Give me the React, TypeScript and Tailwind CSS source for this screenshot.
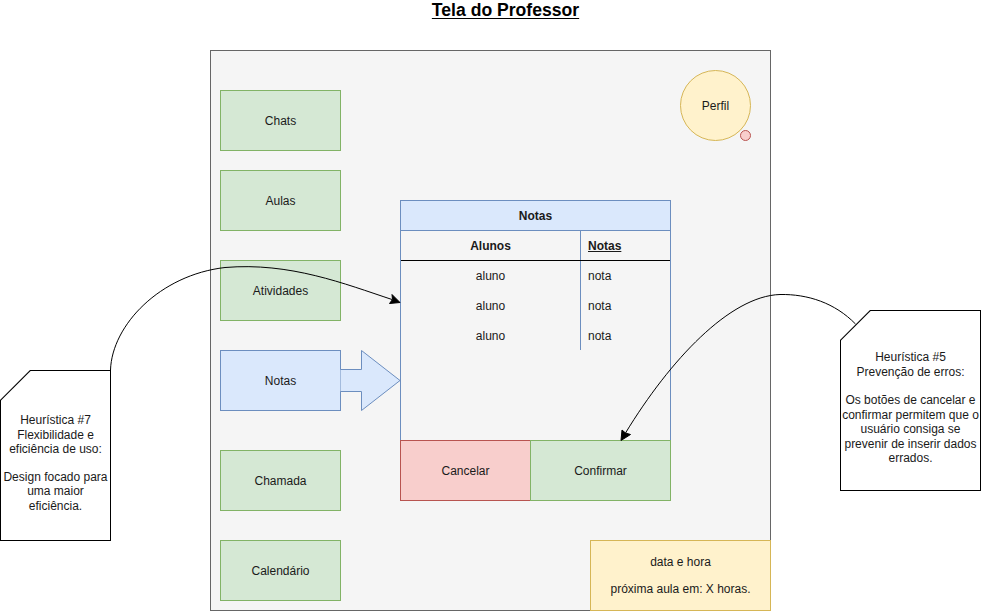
import React from "react";

const Node = ({
  x, y, w, h, cls, children,
}: { x: number; y: number; w: number; h: number; cls: string; children?: React.ReactNode }) => (
  <div
    className={`absolute flex items-center justify-center text-center border ${cls}`}
    style={{ left: x, top: y, width: w + 1, height: h + 1 }}
  >
    {children}
  </div>
);

const green = "bg-[#d5e8d4] border-[#82b366]";
const blue = "bg-[#dae8fc] border-[#6c8ebf]";

export default function App() {
  return (
    <div className="relative w-[981px] h-[611px] bg-white overflow-hidden font-['Liberation_Sans',Arial,sans-serif] text-[12px] text-[#1a1a1a]">
      <div className="absolute left-0 right-0 top-0 flex justify-center">
        <span className="text-[17.6px] leading-[20px] font-bold underline underline-offset-[2px] ml-[30px] text-black">Tela do Professor</span>
      </div>

      {/* main frame */}
      <div className="absolute left-[210px] top-[50px] w-[561px] h-[561px] bg-[#f5f5f5] border border-[#666666]" />

      <Node x={220} y={90} w={120} h={60} cls={green}>Chats</Node>
      <Node x={220} y={170} w={120} h={60} cls={green}>Aulas</Node>
      <Node x={220} y={260} w={120} h={60} cls={green}>Atividades</Node>
      <Node x={220} y={350} w={120} h={60} cls={blue}>Notas</Node>
      <Node x={220} y={450} w={120} h={60} cls={green}>Chamada</Node>
      <Node x={220} y={540} w={120} h={60} cls={green}>Calendário</Node>

      {/* Perfil */}
      <div className="absolute left-[680px] top-[70px] w-[71px] h-[71px] rounded-full bg-[#fff2cc] border border-[#d6b656] flex items-center justify-center">
        Perfil
      </div>
      <div className="absolute left-[740px] top-[130px] w-[11px] h-[11px] rounded-full bg-[#f8cecc] border border-[#b85450]" />

      {/* Table */}
      <div className="absolute left-[400px] top-[200px] w-[271px] h-[241px] border border-[#6c8ebf] flex flex-col">
        <div className="h-[30px] bg-[#dae8fc] border-b border-[#6c8ebf] flex items-center justify-center font-bold">Notas</div>
        <div className="h-[30px] flex border-b border-black">
          <div className="w-[180px] border-r border-[#6c8ebf] flex items-center justify-center font-bold">Alunos</div>
          <div className="flex-1 flex items-center pl-[7px] font-bold underline">Notas</div>
        </div>
        {[0, 1, 2].map((i) => (
          <div key={i} className="h-[30px] flex">
            <div className={`w-[180px] border-r border-[#6c8ebf] flex items-center justify-center ${i === 2 ? "h-[29px]" : ""}`}>aluno</div>
            <div className="flex-1 flex items-center pl-[7px]">nota</div>
          </div>
        ))}
      </div>
      <Node x={400} y={440} w={130} h={60} cls="bg-[#f8cecc] border-[#b85450]">Cancelar</Node>
      <Node x={530} y={440} w={140} h={60} cls={green}>Confirmar</Node>

      {/* Date box */}
      <div className="absolute left-[590px] top-[540px] w-[181px] h-[71px] bg-[#fff2cc] border border-[#d6b656] flex flex-col items-center justify-center gap-[12px] leading-[15px]">
        <div>data e hora</div>
        <div>próxima aula em: X horas.</div>
      </div>

      {/* Notes */}
      <div
        className="absolute left-0 top-[370px] w-[111px] h-[171px] bg-black"
        style={{ clipPath: "polygon(30px 0, 100% 0, 100% 100%, 0 100%, 0 30px)" }}
      >
        <div
          className="absolute inset-[1px] bg-white flex flex-col items-center justify-center text-center leading-[14.5px] pt-[15px]"
          style={{ clipPath: "polygon(29.6px 0, 100% 0, 100% 100%, 0 100%, 0 29.6px)" }}
        >
          <div>Heurística #7</div>
          <div>Flexibilidade e</div>
          <div>eficiência de uso:</div>
          <div className="h-[13px]" />
          <div>Design focado para</div>
          <div>uma maior</div>
          <div>eficiência.</div>
        </div>
      </div>
      <div
        className="absolute left-[840px] top-[310px] w-[141px] h-[181px] bg-black"
        style={{ clipPath: "polygon(30px 0, 100% 0, 100% 100%, 0 100%, 0 30px)" }}
      >
        <div
          className="absolute left-[1px] top-[1px] bottom-[1px] right-[1px] bg-white flex flex-col items-center justify-center text-center leading-[14.5px] pt-[15px]"
          style={{ clipPath: "polygon(29.6px 0, 100% 0, 100% 100%, 0 100%, 0 29.6px)" }}
        >
          <div>Heurística #5</div>
          <div>Prevenção de erros:</div>
          <div className="h-[14px]" />
          <div>Os botões de cancelar e</div>
          <div>confirmar permitem que o</div>
          <div>usuário consiga se</div>
          <div>prevenir de inserir dados</div>
          <div>errados.</div>
        </div>
      </div>

      {/* Drawings */}
      <svg className="absolute inset-0 pointer-events-none" width={981} height={611}>
        {/* block arrow */}
        <path
          d="M340.5 369.5 H361.5 V350.5 L400 380.5 L361.5 410.5 V391.5 H340.5"
          fill="#dae8fc"
          stroke="#6c8ebf"
          strokeWidth={1}
        />
        {/* left connector */}
        <path
          d="M110.5 370 C112 325, 160 275, 225 267.5 C 290 262, 345 284, 392 299.5"
          fill="none"
          stroke="#000"
          strokeWidth={1}
        />
        <path d="M400 302.5 L389.5 303.5 L392.5 299.5 L392 294.5 Z" fill="#000" stroke="#000" strokeWidth={1} />
        {/* right connector */}
        <path
          d="M855.5 324 C 835 303, 808 294, 780 294.5 C 730 296, 670 360, 625.5 433"
          fill="none"
          stroke="#000"
          strokeWidth={1}
        />
        <path d="M621 440.5 L622 430 L625.5 433 L630.5 434.5 Z" fill="#000" stroke="#000" strokeWidth={1} />
      </svg>
    </div>
  );
}
